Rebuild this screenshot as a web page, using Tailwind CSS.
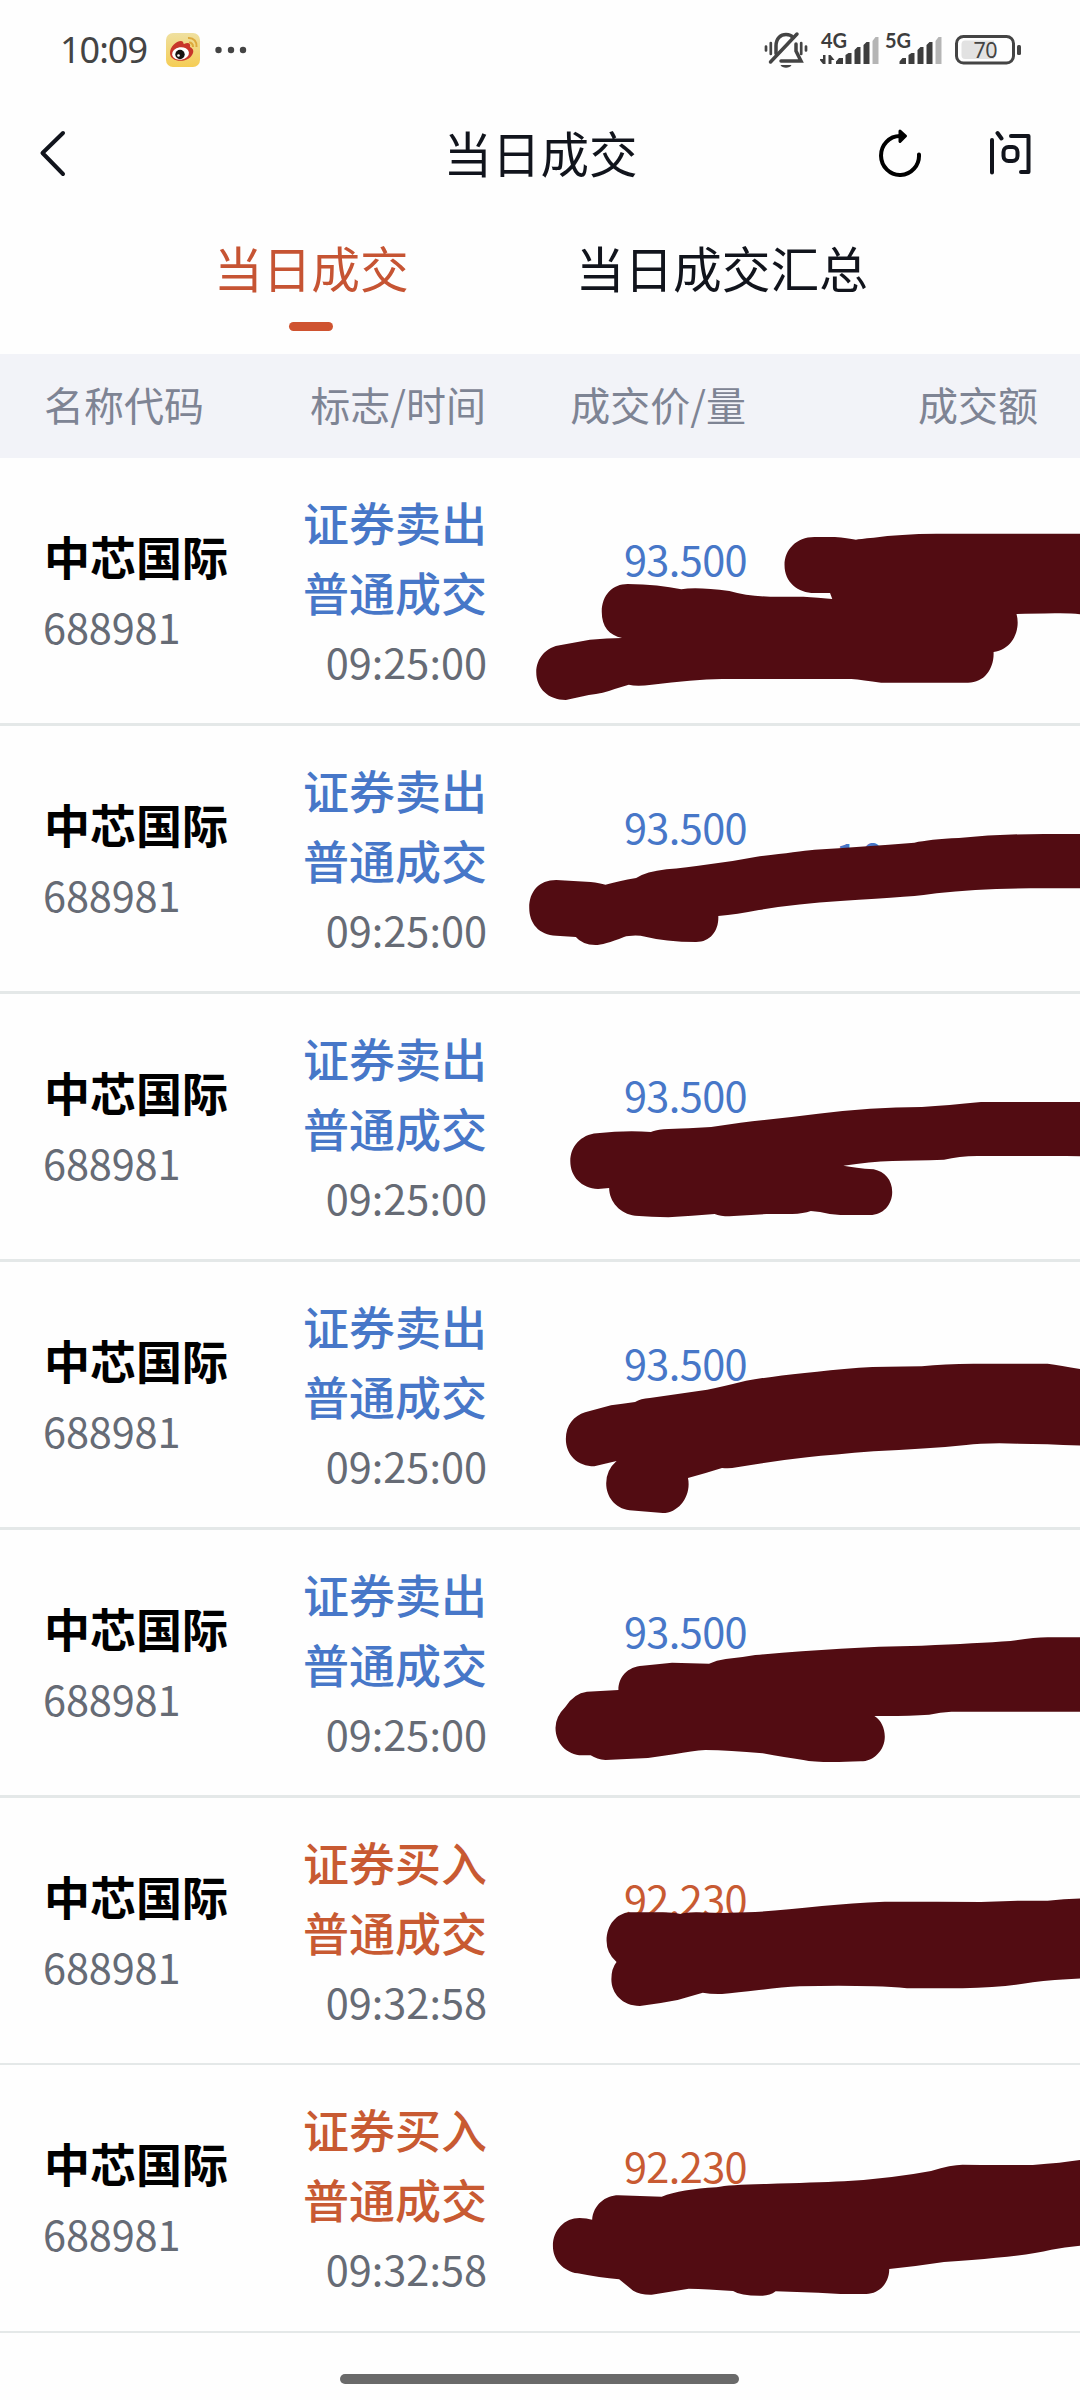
<!DOCTYPE html>
<html lang="zh-CN">

<head>
    <meta charset="UTF-8">
    <meta name="viewport" content="width=device-width, initial-scale=1.0">
    <title>当日成交</title>
    <script src="https://cdn.jsdelivr.net/npm/@tailwindcss/browser@4"></script>
</head>

<body class="bg-[#fefefe] font-['Noto_Sans_CJK_SC',sans-serif]">
    <div class="relative w-[1080px] h-[2400px] overflow-hidden flex flex-col">
        <!-- Status bar -->
        <div class="h-[100px] pl-[60px] pr-[58px] flex items-center justify-between text-[#444]">
            <div class="flex items-center">
                <span class="w-[106px] font-['Noto_Sans'] text-[36px] leading-[50px] tracking-[-1px]">10:09</span>
                <svg class="w-[34px] h-[34px]" viewBox="0 0 34 34">
                    <defs>
                        <linearGradient id="wb" x1="0" y1="0" x2="0" y2="1">
                            <stop offset="0" stop-color="#efe0a0" />
                            <stop offset="1" stop-color="#f5cd55" />
                        </linearGradient>
                    </defs>
                    <rect width="34" height="34" rx="7" fill="url(#wb)" />
                    <path d="M4 20C4 14 10 8 15 8C18 8 17 11 18 11C22 9 25 10 24 14C28 16 28 19 26 22C22 30 4 30 4 20Z" fill="#c8352a" />
                    <ellipse cx="14.500" cy="20.500" rx="8.500" ry="6.300" fill="#fff" transform="rotate(-8 14.500 20.500)" />
                    <circle cx="14" cy="21.500" r="4.700" fill="#161210" />
                    <circle cx="12.500" cy="22.500" r="1.300" fill="#fff" />
                    <path d="M22 5C28 4.500 31 9 30.500 14M23 9.500C26 9.500 27 11 27 14" fill="none" stroke="#dda93c" stroke-width="2" />
                </svg>
                <svg class="w-[32px] h-[8px] ml-[15px]" viewBox="0 0 32 8" fill="#444">
                    <circle cx="3.500" cy="4" r="3.200" />
                    <circle cx="16" cy="4" r="3.200" />
                    <circle cx="28" cy="4" r="3.200" />
                </svg>
            </div>
            <div class="flex items-center">
                <!-- Muted bell -->
                <svg class="w-[44px] h-[38px] mr-[12px]" viewBox="0 0 44 38" fill="none" stroke="#444" stroke-width="3.500" stroke-linecap="round">
                    <path d="M2 15.500v4M6.800 12v11M37.200 12v11M42 15.500v4" stroke-width="2.700" />
                    <path d="M12 22.500V15C12 7 17 3.500 22 3.500C25 3.500 27.500 4.500 29 6.500" />
                    <path d="M32 13V20L37 30H17" />
                    <path d="M6.500 31L33 3" />
                    <path d="M16.500 34H27.500C26 37.500 18 37.500 16.500 34Z" fill="#444" stroke="none" />
                </svg>
                <svg class="w-[125px] h-[50px] mr-[10px]" viewBox="0 -8 125 50" fill="#3d3d3d">
                    <text x="1" y="14.500" font-family="Lato" font-weight="700" font-size="20" textLength="26">4G</text>
                    <text x="65" y="14.500" font-family="Lato" font-weight="700" font-size="20" textLength="26">5G</text>
                    <path d="M3 22h2.500v9h-2.500l-4-5h4zM8.500 31v-9h2l4 5h-3v4z" />
                    <path d="M16 31v-2.500l3-3.500h4v6zM25.500 31v-9l3-2h3v11zM34.500 31v-14l3-3h3v17zM43.500 31v-19l3-3h3v22z" />
                    <path d="M52.500 31v-23l3-4h3v27z" fill="#b5b5b5" />
                    <path d="M79.500 31v-2.500l3-3.500h3.500v6zM88.500 31v-9l3-2h3v11zM97.500 31v-14l3-3h3v17zM106.500 31v-19l3-3h3v22z" />
                    <path d="M115.500 31v-23l3-4h3v27z" fill="#b5b5b5" />
                </svg>
                <svg class="w-[67px] h-[30px]" viewBox="0 0 67 30">
                    <rect x="1.500" y="1.500" width="57" height="26.500" rx="7" fill="none" stroke="#444" stroke-width="3" />
                    <path d="M10 5.500H39V24H10Q6.500 24 6.500 20V9.500Q6.500 5.500 10 5.500Z" fill="#e2e2e2" />
                    <rect x="62" y="10" width="4" height="10" rx="1.500" fill="#444" />
                    <text x="18.500" y="23" font-family="Noto Sans" font-size="21.500" fill="#444" textLength="24">70</text>
                </svg>
            </div>
        </div>

        <!-- Title bar -->
        <div class="h-[106px] pl-[38px] pr-[46px] flex items-center justify-between text-[#11141c]">
            <svg class="w-[110px] h-[48px]" viewBox="0 0 110 48" fill="none" stroke="#11141c" stroke-width="4" stroke-linecap="round" stroke-linejoin="round">
                <path d="M25 4L4.500 24L25 45" />
            </svg>
            <h1 class="pl-[55px] pb-[2px] text-[48.500px] leading-[70px]">当日成交</h1>
            <svg class="w-[156px] h-[48px]" viewBox="878 129 156 48" fill="none" stroke="#11141c" stroke-width="4" stroke-linecap="round" stroke-linejoin="round">
                <path d="M919 154.500A19 19.500 0 1 1 900 136" stroke="#000" />
                <path d="M900 131L905.500 136L900 141.500Z" fill="#000" stroke="#000" stroke-width="3" />
                <path d="M992 140V172.500M997.500 133L1001.500 138.500M1011 136H1028.500V172H1021" />
                <rect x="1003.500" y="147" width="14" height="14" rx="5" />
            </svg>
        </div>

        <!-- Tabs -->
        <div class="h-[148px] pl-[214px] pt-[26px] flex items-start gap-[167px] text-[48.700px] leading-[70px]">
            <div class="flex flex-col items-center text-[#c65433]">
                <span>当日成交</span>
                <span class="mt-[20px] w-[44px] h-[9px] rounded-full bg-[#cf5330]"></span>
            </div>
            <span class="text-[#11141c]">当日成交汇总</span>
        </div>

        <!-- Table head -->
        <div class="h-[104px] pl-[44px] pr-[42px] pb-[4px] grid grid-cols-[200px_242px_260px_1fr] items-center bg-[#f2f3f8] text-[#7e8494] text-[40px] leading-[60px] text-right">
            <span class="text-left">名称代码</span>
            <span>标志/时间</span>
            <span>成交价/量</span>
            <span>成交额</span>
        </div>

        <div id="list"></div>

        <!-- Marker strokes hiding the amounts -->
        <svg class="absolute left-0 top-0 w-[1080px] h-[2400px] pointer-events-none" viewBox="0 0 1080 2400" fill="#520c12">
            <path transform="translate(500 500) scale(.37 .33333)" d="M850 111H905Q940 114 962 119Q970 117 1010 113Q1080 102 1180 101H1580V345Q1550 339 1500 340Q1440 341 1396 342C1408 390 1385 450 1334 456C1336 505 1310 548 1265 548H1030Q980 540 950 537H600Q520 539 410 554Q370 560 348 554L310 567Q280 580 240 585L178 600C130 600 98 565 98 517C98 475 125 440 165 435L243 419Q290 414 330 414C295 405 275 380 275 335C275 285 305 252 345 252Q430 253 490 268Q530 260 620 273Q670 289 730 290H820Q860 292 898 297L892 279H850C805 279 769 247 769 195C769 150 800 111 850 111Z" />
            <path transform="translate(500 780) scale(.37 .33333)" d="M152 300L245 306Q270 309 285 314Q320 303 368 294Q395 275 450 268Q500 264 570 252Q630 244 690 231Q800 215 850 209Q980 200 1120 188Q1160 178 1240 174Q1350 162 1470 162H1580V325H1450Q1300 324 1180 340Q1130 350 920 363Q800 371 700 390Q640 403 590 408C592 450 570 486 530 486Q450 486 380 467Q350 465 335 471Q280 495 258 495Q222 494 205 471L152 467C105 465 79 430 79 383C79 335 105 300 152 300Z" />
            <path transform="translate(500 1060) scale(.37 .33333)" d="M262 220Q340 210 408 216Q425 206 510 205Q580 202 650 188Q760 175 860 161Q1000 142 1140 141Q1210 136 1300 126H1580V290Q1560 288 1530 288H1290Q1240 289 1200 299Q1120 302 1060 303Q1000 305 928 317Q960 324 1010 328C1040 335 1060 360 1060 396C1060 435 1035 465 1000 465H920Q890 463 865 456L840 453Q820 461 790 462H720L620 469Q595 469 580 462Q520 467 455 472Q410 470 365 467C325 462 295 425 295 384L265 387C220 385 190 350 190 304C190 260 218 224 262 220Z" />
            <path transform="translate(500 1330) scale(.37 .33333)" d="M230 247L300 226Q330 221 365 216Q380 206 405 204L560 179Q600 170 665 152Q770 132 970 113Q1040 110 1140 109Q1200 101 1280 101H1480Q1520 107 1580 120V347Q1480 342 1400 341Q1310 338 1260 345Q1150 357 1010 364Q900 374 830 382Q740 393 640 412Q620 417 600 414Q555 430 508 444C518 495 485 549 440 549L350 541C310 535 287 500 287 460Q287 420 315 393L255 409C210 409 178 375 178 327C178 285 200 258 230 247Z" />
            <path transform="translate(500 1600) scale(.37 .33333)" d="M235 275L320 270C320 230 345 200 385 197L465 188L565 191Q585 180 610 177Q650 173 690 165Q810 153 920 146Q1020 139 1140 137Q1290 130 1380 123Q1440 113 1480 112H1580V335H1220Q1190 337 1160 344Q1100 349 1012 348C1030 360 1040 385 1040 410C1040 450 1010 484 975 484Q860 490 820 480Q770 472 710 460Q620 451 555 450Q520 452 470 463L400 474L285 480Q262 478 245 466H222C180 464 150 430 150 383Q150 350 177 320Q200 280 235 275Z" />
            <path transform="translate(500 1860) scale(.37 .33333)" d="M350 157H440Q470 158 487 162Q500 157 530 157L600 159L690 156Q760 151 870 138Q950 129 1040 125H1180L1300 126L1400 122L1480 122Q1530 116 1580 115V355Q1500 358 1440 367Q1360 382 1250 385H1100Q1060 380 1010 379Q920 376 810 379Q760 382 700 390Q640 398 600 402Q570 403 548 398L480 420Q430 431 378 438C330 438 301 400 301 358Q301 325 315 306Q288 280 288 242C288 195 315 160 350 157Z" />
            <path transform="translate(500 2130) scale(.37 .33333)" d="M215 264Q235 264 249 269C252 225 285 196 320 196L437 200Q490 178 585 172Q620 164 720 162Q850 158 930 154Q1060 145 1165 123Q1220 104 1250 104L1300 105H1440Q1530 98 1580 88V346Q1530 350 1490 359Q1430 375 1340 383Q1280 390 1200 396Q1130 408 1052 417C1052 460 1025 491 990 492H920L860 488L745 484Q730 497 710 497Q650 498 630 483Q560 477 510 476L410 494Q380 495 360 482L322 448Q270 443 210 430C170 423 143 390 143 347C143 300 175 264 215 264Z" />
        </svg>

        <!-- Gesture bar -->
        <div class="mt-auto mb-[16px] ml-[340px] w-[399px] h-[10px] rounded-full bg-[#6a6a6a]"></div>
    </div>

    <script>
        const trades = [
            { side: "证券卖出", time: "09:25:00", price: "93.500", amount: "" },
            { side: "证券卖出", time: "09:25:00", price: "93.500", amount: "10" },
            { side: "证券卖出", time: "09:25:00", price: "93.500", amount: "" },
            { side: "证券卖出", time: "09:25:00", price: "93.500", amount: "" },
            { side: "证券卖出", time: "09:25:00", price: "93.500", amount: "" },
            { side: "证券买入", time: "09:32:58", price: "92.230", amount: "" },
            { side: "证券买入", time: "09:32:58", price: "92.230", amount: "" },
        ];

        // Sells are blue, buys are orange
        document.getElementById("list").innerHTML = trades.map((t) => {
            const color = t.side === "证券卖出" ? "text-[#4777c8]" : "text-[#c85a32]";
            // Buy rows have a thinner separator
            const border = t.side === "证券卖出" ? "h-[268px] border-b-[3px]" : "h-[267px] last:h-[268px] border-b-2";
            return `
            <div class="pl-[44px] pr-[42px] grid grid-cols-[200px_243px_260px_1fr] ${border} border-[#e4e8e8] text-[41.500px] leading-[70px] text-right">
                <div class="pt-[62px] text-left">
                    <div class="text-[46px] font-bold text-black">中芯国际</div>
                    <div class="ml-[-1px] pt-[1px] tracking-[-0.15px] text-[#666b75]">688981</div>
                </div>
                <div class="pt-[28px]">
                    <div class="text-[46px] font-medium ${color}">${t.side}</div>
                    <div class="text-[46px] font-medium ${color}">普通成交</div>
                    <div class="text-[#666b75]">${t.time}</div>
                </div>
                <div class="pt-[65px] tracking-[-0.6px] ${color}">${t.price}</div>
                <div class="pt-[95px] pl-[88px] text-left tracking-[3px] ${color}">${t.amount}</div>
            </div>`;
        }).join("");
    </script>
</body>

</html>
